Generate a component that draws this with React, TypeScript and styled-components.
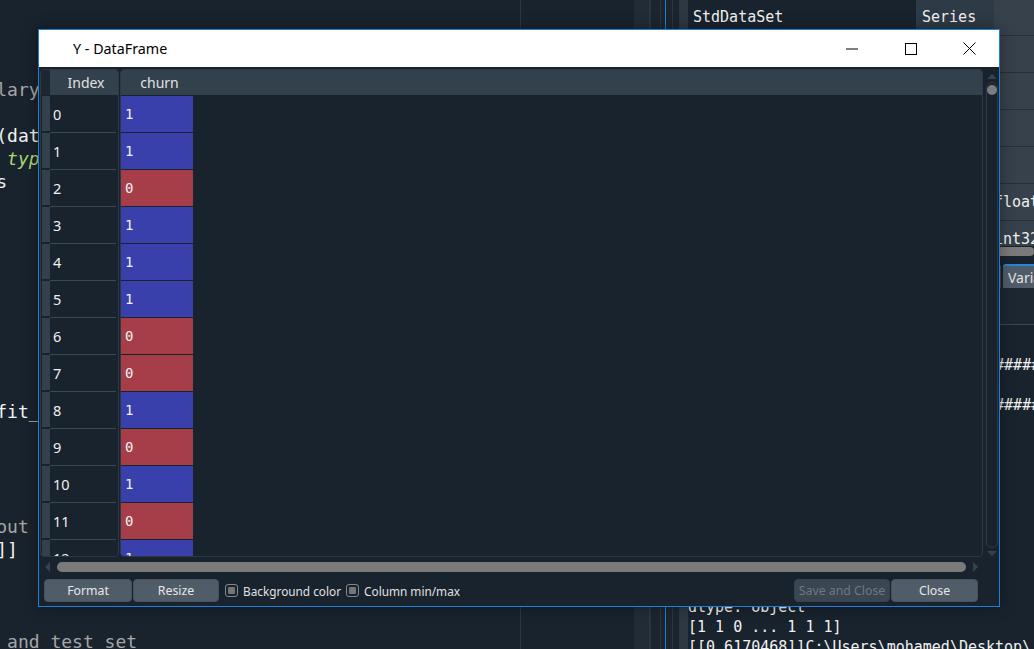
import React from "react";
import styled, { createGlobalStyle } from "styled-components";

const Global = createGlobalStyle`
  html, body { margin: 0; padding: 0; background: #19232d; }
  body { width: 1034px; height: 649px; overflow: hidden; font-family: "Noto Sans", "Open Sans", sans-serif; }
  * { box-sizing: border-box; }
`;

const Desktop = styled.div`
  position: relative;
  width: 1034px;
  height: 649px;
  overflow: hidden;
  display: flex;
  background: #19232d;
`;

/* ---------- code editor (background) ---------- */
const Editor = styled.div`
  width: 521px;
  flex: none;
  padding-top: 8.5px;
  border-right: 1px solid #2b3742;
  font-family: "DejaVu Sans Mono", monospace;
  font-size: 18px;
  overflow: hidden;
`;

type Tone = "plain" | "comment" | "kw";
const CodeLine = styled.div<{ $tone: Tone }>`
  height: 23px;
  line-height: 23px;
  white-space: pre;
  margin-left: -3.8px;
  color: ${(p) => (p.$tone === "comment" ? "#a6a6a6" : p.$tone === "kw" ? "#a8d672" : "#f2f2f2")};
  font-style: ${(p) => (p.$tone === "kw" ? "italic" : "normal")};
`;

const codeLines: { t: string; tone: Tone }[] = [
  { t: "", tone: "plain" },
  { t: "", tone: "plain" },
  { t: "", tone: "plain" },
  { t: "lary", tone: "comment" },
  { t: "", tone: "plain" },
  { t: "(dat", tone: "plain" },
  { t: " typ", tone: "kw" },
  { t: "s", tone: "plain" },
  { t: "", tone: "plain" },
  { t: "", tone: "plain" },
  { t: "", tone: "plain" },
  { t: "", tone: "plain" },
  { t: "", tone: "plain" },
  { t: "", tone: "plain" },
  { t: "", tone: "plain" },
  { t: "", tone: "plain" },
  { t: "", tone: "plain" },
  { t: "fit_", tone: "plain" },
  { t: "", tone: "plain" },
  { t: "", tone: "plain" },
  { t: "", tone: "plain" },
  { t: "", tone: "plain" },
  { t: "out", tone: "comment" },
  { t: "]]", tone: "plain" },
  { t: "", tone: "plain" },
  { t: "", tone: "plain" },
  { t: "", tone: "plain" },
  { t: " and test set", tone: "comment" },
];

/* ---------- dock separators ---------- */
const DockGutter = styled.div`
  width: 113px;
  flex: none;
  background: #19232d;
`;
const DockStrip = styled.div<{ $w: number; $bg: string }>`
  width: ${(p) => p.$w}px;
  flex: none;
  background: ${(p) => p.$bg};
`;

/* ---------- right pane ---------- */
const RightPane = styled.div`
  flex: 1;
  display: flex;
  flex-direction: column;
  min-width: 0;
  background: #19232d;
`;
const VarTable = styled.div`
  height: 255px;
  margin-top: -1.5px;
  overflow: hidden;
  font-family: "DejaVu Sans Mono", monospace;
  font-size: 15px;
`;
const VarRow = styled.div`
  display: flex;
  height: 37px;
  border-bottom: 1px solid #26313b;
`;
const VarName = styled.div`
  width: 228px;
  flex: none;
  padding-left: 5px;
  display: flex;
  align-items: center;
  color: #f0f0f0;
`;
const VarType = styled.div`
  width: 78px;
  flex: none;
  padding-left: 6px;
  display: flex;
  align-items: center;
  background: #2e3a45;
  color: #f0f0f0;
`;
const VarSize = styled.div`
  flex: 1;
  display: flex;
  align-items: center;
  background: #37414b;
  color: #f0f0f0;
  white-space: pre;
`;
const VarHScroll = styled.div`
  height: 9px;
  margin-top: 1px;
  background: #7a7a7a;
  border-radius: 4px;
`;
const TabBar = styled.div`
  margin-top: 7px;
  height: 26px;
  display: flex;
  align-items: flex-end;
  gap: 2px;
  padding-left: 267px;
`;
const Tab = styled.div<{ $active?: boolean; $w?: number }>`
  height: 24px;
  width: ${(p) => (p.$w ? `${p.$w}px` : "auto")};
  flex: none;
  padding: 0 5px;
  display: flex;
  align-items: center;
  background: ${(p) => (p.$active ? "#505d69" : "#3a4652")};
  border-top: 2px solid ${(p) => (p.$active ? "#2a84d8" : "transparent")};
  border-radius: 3px 3px 0 0;
  font-size: 14px;
  color: #e0e1e3;
  white-space: nowrap;
`;
const ConsoleHead = styled.div`
  height: 38px;
  border-bottom: 1px solid #3a4651;
  background: #1d2731;
`;
const Console = styled.div`
  padding-top: 29.5px;
  font-family: "DejaVu Sans Mono", monospace;
  font-size: 15px;
  color: #f0f0f0;
  overflow: hidden;
`;
const ConsoleLine = styled.div`
  height: 20.2px;
  line-height: 20.2px;
  white-space: pre;
`;

/* ---------- dialog ---------- */
const Dialog = styled.div`
  position: absolute;
  left: 38px;
  top: 29px;
  width: 962px;
  height: 578px;
  border: 1px solid #1f7fd6;
  background: #19232d;
  display: flex;
  flex-direction: column;
  box-shadow: 0 0 14px rgba(0, 0, 0, 0.35);
`;
const TitleBar = styled.div`
  height: 37px;
  flex: none;
  background: #ffffff;
  display: flex;
  align-items: center;
  padding-left: 34px;
`;
const Title = styled.div`
  flex: 1;
  font-family: "Noto Sans", sans-serif;
  font-size: 14.3px;
  color: #000;
`;
const WinButton = styled.div`
  width: 59px;
  height: 37px;
  display: flex;
  align-items: center;
  justify-content: center;
`;
const Body = styled.div`
  flex: 1;
  display: flex;
  flex-direction: column;
  padding: 2px 0 3px 1px;
  min-height: 0;
`;
const TablesRow = styled.div`
  height: 488px;
  flex: none;
  display: flex;
  gap: 1px;
`;
const Frame = styled.div<{ $w: number }>`
  width: ${(p) => p.$w}px;
  flex: none;
  border: 1px solid #2c3844;
  border-radius: 4px;
  display: flex;
  flex-direction: column;
  overflow: hidden;
`;
const HeaderRow = styled.div`
  height: 25px;
  flex: none;
  display: flex;
  background: #32414b;
  margin-bottom: 1px;
`;
const Corner = styled.div`
  width: 9px;
  flex: none;
  background: #1c2731;
`;
const HeaderCell = styled.div<{ $w?: number }>`
  width: ${(p) => (p.$w ? `${p.$w}px` : "auto")};
  flex: ${(p) => (p.$w ? "none" : "1")};
  display: flex;
  align-items: center;
  justify-content: center;
  padding-left: 4px;
  font-size: 14px;
  color: #e0e1e3;
`;
const IndexRow = styled.div`
  height: 37px;
  flex: none;
  display: flex;
  padding: 0 1px;
`;
const VHeader = styled.div`
  width: 8px;
  flex: none;
  background: #32414b;
  margin-bottom: 2px;
`;
const IndexCell = styled.div`
  flex: 1;
  display: flex;
  align-items: center;
  padding-left: 3px;
  border-bottom: 1px solid #3b4752;
  margin-right: 1px;
  font-size: 14.5px;
  color: #f0f0f0;
`;
const DataRow = styled.div`
  height: 37px;
  flex: none;
  display: flex;
`;
const DataCell = styled.div<{ $v: number }>`
  width: 72px;
  height: 36px;
  flex: none;
  display: flex;
  align-items: center;
  padding-left: 4px;
  background: ${(p) => (p.$v ? "#3a40ab" : "#a53e49")};
  font-family: "DejaVu Sans Mono", monospace;
  font-size: 14px;
  color: #f2f2f2;
`;
const VScroll = styled.div`
  width: 14px;
  flex: none;
  margin-left: 1px;
  display: flex;
  flex-direction: column;
  align-items: center;
  padding-top: 4px;
`;
const VTrack = styled.div`
  flex: 1;
  width: 12px;
  margin: 2px 0;
  border: 1px solid #2c3844;
  border-radius: 6px;
  display: flex;
  justify-content: center;
  padding-top: 2px;
`;
const Knob = styled.div`
  width: 10px;
  height: 10px;
  border-radius: 50%;
  background: #7c7c7c;
`;
const HScrollRow = styled.div`
  height: 18px;
  flex: none;
  display: flex;
  align-items: center;
  padding: 1px 20px 0 4px;
  gap: 6px;
`;
const HTrack = styled.div`
  flex: 1;
  height: 10px;
  border-radius: 5px;
  background: #7a7a7a;
`;
const ButtonRow = styled.div`
  height: 23px;
  margin-top: 4px;
  flex: none;
  display: flex;
  align-items: center;
  padding: 0 20px 0 4px;
`;
const Button = styled.div<{ $w: number; $disabled?: boolean }>`
  width: ${(p) => p.$w}px;
  height: 23px;
  flex: none;
  margin-right: 1px;
  display: flex;
  align-items: center;
  justify-content: center;
  border-radius: 4px;
  border: 1px solid ${(p) => (p.$disabled ? "#36424d" : "#46535f")};
  background: ${(p) => (p.$disabled ? "#3a4651" : "#505d69")};
  color: ${(p) => (p.$disabled ? "#6e7882" : "#e6e7e8")};
  font-size: 12.3px;
`;
const Check = styled.label`
  display: flex;
  align-items: center;
  gap: 5px;
  margin-left: 5px;
  font-size: 11.8px;
  color: #e0e1e3;
`;
const CheckBox = styled.span`
  width: 13px;
  height: 13px;
  border: 1px solid #7d8891;
  border-radius: 3px;
  padding: 2px;
  display: flex;
`;
const CheckFill = styled.span`
  flex: 1;
  background: #757575;
  border-radius: 1px;
`;
const Spacer = styled.div`
  flex: 1;
`;

const ArrowSvg = ({ dir }: { dir: "up" | "down" | "left" | "right" }) => {
  const pts = {
    up: "0,6 5,1 10,6",
    down: "0,1 5,6 10,1",
    left: "6,0 1,5 6,10",
    right: "1,0 6,5 1,10",
  }[dir];
  const vertical = dir === "up" || dir === "down";
  return (
    <svg width={vertical ? 10 : 7} height={vertical ? 7 : 10} viewBox={vertical ? "0 0 10 7" : "0 0 7 10"}>
      <polygon points={pts} fill="#36434f" />
    </svg>
  );
};

const rows = [1, 1, 0, 1, 1, 1, 0, 0, 1, 0, 1, 0, 1, 1];
const hashes = "#".repeat(44);

export default function App() {
  return (
    <>
      <Global />
      <Desktop>
        <Editor>
          {codeLines.map((l, i) => (
            <CodeLine key={i} $tone={l.tone}>
              {l.t || " "}
            </CodeLine>
          ))}
        </Editor>
        <DockGutter />
        <DockStrip $w={15} $bg="#222c36" />
        <DockStrip $w={2} $bg="#2c3640" />
        <DockStrip $w={9} $bg="#1c252e" />
        <DockStrip $w={1} $bg="#2c3640" />
        <DockStrip $w={4} $bg="#1c252e" />
        <DockStrip $w={1} $bg="#1f7fd6" />
        <DockStrip $w={6} $bg="#1c252e" />
        <DockStrip $w={1} $bg="#2c3640" />
        <DockStrip $w={6} $bg="#1c252e" />
        <DockStrip $w={1} $bg="#2c3640" />
        <DockStrip $w={8} $bg="#2e3842" />
        <RightPane>
          <VarTable>
            <VarRow>
              <VarName>StdDataSet</VarName>
              <VarType>Series</VarType>
              <VarSize> </VarSize>
            </VarRow>
            {[0, 1, 2, 3].map((i) => (
              <VarRow key={i}>
                <VarName> </VarName>
                <VarType> </VarType>
                <VarSize> </VarSize>
              </VarRow>
            ))}
            <VarRow>
              <VarName> </VarName>
              <VarType> </VarType>
              <VarSize>float64</VarSize>
            </VarRow>
            <VarRow>
              <VarName> </VarName>
              <VarType> </VarType>
              <VarSize>int32</VarSize>
            </VarRow>
          </VarTable>
          <VarHScroll />
          <TabBar>
            <Tab $w={46}>Help</Tab>
            <Tab $active>Variable explorer</Tab>
          </TabBar>
          <ConsoleHead />
          <Console>
            <ConsoleLine>{hashes}</ConsoleLine>
            <ConsoleLine> </ConsoleLine>
            <ConsoleLine>{hashes}</ConsoleLine>
            {[0, 1, 2, 3, 4, 5, 6, 7, 8].map((i) => (
              <ConsoleLine key={i}> </ConsoleLine>
            ))}
            <ConsoleLine>dtype: object</ConsoleLine>
            <ConsoleLine>[1 1 0 ... 1 1 1]</ConsoleLine>
            <ConsoleLine>[[0.6170468]]C:\Users\mohamed\Desktop\</ConsoleLine>
          </Console>
        </RightPane>

        <Dialog>
          <TitleBar>
            <Title>Y - DataFrame</Title>
            <WinButton>
              <svg width="12" height="2" viewBox="0 0 12 2">
                <rect x="0" y="0.5" width="12" height="1" fill="#000" />
              </svg>
            </WinButton>
            <WinButton>
              <svg width="12" height="12" viewBox="0 0 12 12">
                <rect x="0.5" y="0.5" width="11" height="11" fill="none" stroke="#000" strokeWidth="1" />
              </svg>
            </WinButton>
            <WinButton>
              <svg width="13" height="13" viewBox="0 0 13 13">
                <path d="M0.5 0.5 L12.5 12.5 M12.5 0.5 L0.5 12.5" stroke="#000" strokeWidth="1" />
              </svg>
            </WinButton>
          </TitleBar>
          <Body>
            <TablesRow>
              <Frame $w={79}>
                <HeaderRow>
                  <Corner />
                  <HeaderCell>Index</HeaderCell>
                </HeaderRow>
                {rows.map((_, i) => (
                  <IndexRow key={i}>
                    <VHeader />
                    <IndexCell>{i}</IndexCell>
                  </IndexRow>
                ))}
              </Frame>
              <Frame $w={863}>
                <HeaderRow>
                  <HeaderCell $w={73}>churn</HeaderCell>
                  <HeaderCell />
                </HeaderRow>
                {rows.map((v, i) => (
                  <DataRow key={i}>
                    <DataCell $v={v}>{v}</DataCell>
                  </DataRow>
                ))}
              </Frame>
              <VScroll>
                <ArrowSvg dir="up" />
                <VTrack>
                  <Knob />
                </VTrack>
                <ArrowSvg dir="down" />
              </VScroll>
            </TablesRow>
            <HScrollRow>
              <ArrowSvg dir="left" />
              <HTrack />
              <ArrowSvg dir="right" />
            </HScrollRow>
            <ButtonRow>
              <Button $w={88}>Format</Button>
              <Button $w={86}>Resize</Button>
              <Check>
                <CheckBox>
                  <CheckFill />
                </CheckBox>
                Background color
              </Check>
              <Check>
                <CheckBox>
                  <CheckFill />
                </CheckBox>
                Column min/max
              </Check>
              <Spacer />
              <Button $w={96} $disabled>
                Save and Close
              </Button>
              <Button $w={87}>Close</Button>
            </ButtonRow>
          </Body>
        </Dialog>
      </Desktop>
    </>
  );
}
